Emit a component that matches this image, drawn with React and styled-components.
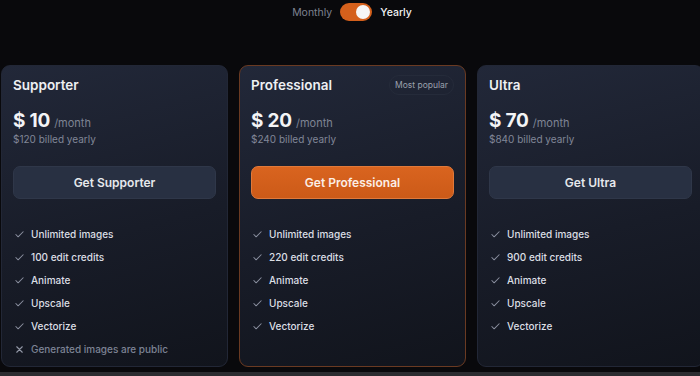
import { useState } from "react";
import styled, { createGlobalStyle, css } from "styled-components";

const plans = [
  {
    name: "Supporter",
    price: 10,
    yearly: 120,
    credits: 100,
    extra: { text: "Generated images are public", ok: false },
  },
  { name: "Professional", price: 20, yearly: 240, credits: 220, popular: true },
  { name: "Ultra", price: 70, yearly: 840, credits: 900 },
];

function Check() {
  return (
    <svg width="11" height="11" viewBox="0 0 24 24" fill="none" stroke="currentColor" strokeWidth="2.2" strokeLinecap="round" strokeLinejoin="round">
      <path d="M20 6 9 17l-5-5" />
    </svg>
  );
}

function Cross() {
  return (
    <svg width="11" height="11" viewBox="0 0 24 24" fill="none" stroke="currentColor" strokeWidth="2.4" strokeLinecap="round">
      <path d="M18 6 6 18M6 6l12 12" />
    </svg>
  );
}

export default function App() {
  const [yearly, setYearly] = useState(true);

  return (
    <Page>
      <GlobalStyle />
      <Toggle>
        <ToggleLabel $active={!yearly}>Monthly</ToggleLabel>
        <Switch $on={yearly} onClick={() => setYearly(!yearly)}>
          <Knob $on={yearly} />
        </Switch>
        <ToggleLabel $active={yearly}>Yearly</ToggleLabel>
      </Toggle>
      <Cards>
        {plans.map((plan) => {
          const features = [
            { text: "Unlimited images", ok: true },
            { text: `${plan.credits} edit credits`, ok: true },
            { text: "Animate", ok: true },
            { text: "Upscale", ok: true },
            { text: "Vectorize", ok: true },
          ];
          if (plan.extra) features.push(plan.extra);
          return (
            <Card key={plan.name} $highlight={plan.popular}>
              <TitleRow>
                <Title>{plan.name}</Title>
                {plan.popular && <Badge>Most popular</Badge>}
              </TitleRow>
              <PriceRow>
                <Price>$ {plan.price}</Price>
                <Per>/month</Per>
              </PriceRow>
              <Billed>${plan.yearly} billed yearly</Billed>
              <Button $primary={plan.popular}>Get {plan.name}</Button>
              <Features>
                {features.map((f) => (
                  <Feature key={f.text} $ok={f.ok}>
                    <Icon $ok={f.ok}>{f.ok ? <Check /> : <Cross />}</Icon>
                    {f.text}
                  </Feature>
                ))}
              </Features>
            </Card>
          );
        })}
      </Cards>
      <Footer />
    </Page>
  );
}

const GlobalStyle = createGlobalStyle`
  * { box-sizing: border-box; }
  html, body {
    margin: 0;
    background: #09090c;
    overflow: hidden;
  }
  body {
    font-family: Inter, "Noto Sans", sans-serif;
  }
`;

const Page = styled.div`
  width: 700px;
  height: 376px;
  display: flex;
  flex-direction: column;
  overflow: hidden;
`;

const Toggle = styled.div`
  display: flex;
  align-items: center;
  justify-content: center;
  gap: 8px;
  padding: 3px 0 0 4px;
  height: 21px;
`;

const ToggleLabel = styled.span`
  font-size: 10.5px;
  color: ${(p) => (p.$active ? "#f1f2f4" : "#7d8290")};
  font-weight: ${(p) => (p.$active ? 500 : 400)};
`;

const Switch = styled.div`
  width: 32px;
  height: 18px;
  border-radius: 9px;
  background: ${(p) => (p.$on ? "#d4601c" : "#3a3f4c")};
  padding: 2px;
  display: flex;
  justify-content: ${(p) => (p.$on ? "flex-end" : "flex-start")};
  cursor: pointer;
`;

const Knob = styled.div`
  width: 14px;
  height: 14px;
  border-radius: 50%;
  background: #f6f6f6;
`;

const Cards = styled.div`
  display: flex;
  gap: 11px;
  margin-top: 44px;
  padding-left: 1px;
  height: 302px;
`;

const Card = styled.div`
  flex: 0 0 227px;
  border-radius: 9px;
  padding: 8px 11px 0 11px;
  background: linear-gradient(165deg, #222839 0%, #181c28 55%, #11141c 100%);
  border: 1px solid ${(p) => (p.$highlight ? "#6a3a22" : "#222736")};
  display: flex;
  flex-direction: column;
`;

const TitleRow = styled.div`
  display: flex;
  align-items: center;
  justify-content: space-between;
  height: 20px;
  margin-top: 1px;
`;

const Title = styled.h2`
  margin: 0;
  font-size: 13.5px;
  font-weight: 600;
  color: #eef0f3;
`;

const Badge = styled.span`
  font-size: 8.5px;
  color: #9aa0ad;
  border: 1px solid #252b3a;
  border-radius: 10px;
  padding: 4px 5px;
`;

const PriceRow = styled.div`
  display: flex;
  align-items: baseline;
  gap: 4px;
  margin-top: 14px;
`;

const Price = styled.span`
  font-size: 19px;
  font-weight: 700;
  color: #f3f4f6;
  letter-spacing: -0.2px;
`;

const Per = styled.span`
  font-size: 11px;
  color: #7e8494;
`;

const Billed = styled.div`
  font-size: 10px;
  color: #818798;
  margin-top: 1px;
`;

const Button = styled.button`
  margin-top: 21px;
  height: 33px;
  width: 100%;
  border-radius: 7px;
  font-family: inherit;
  font-size: 12px;
  font-weight: 600;
  cursor: pointer;
  ${(p) =>
    p.$primary
      ? css`
          background: linear-gradient(180deg, #d9641f, #cc5a18);
          border: 1px solid #e0793a;
          color: #fbeee6;
        `
      : css`
          background: #283042;
          border: 1px solid #2f3749;
          color: #e6e8ec;
        `}
`;

const Features = styled.ul`
  list-style: none;
  margin: 28px 0 0;
  padding: 0 0 0 1px;
  display: flex;
  flex-direction: column;
  gap: 9px;
`;

const Feature = styled.li`
  display: flex;
  align-items: center;
  gap: 6px;
  height: 14px;
  font-size: 10px;
  font-weight: 500;
  color: ${(p) => (p.$ok ? "#dcdfe5" : "#7d8395")};
`;

const Icon = styled.span`
  display: flex;
  width: 11px;
  justify-content: center;
  color: ${(p) => (p.$ok ? "#8b90a0" : "#9297a6")};
`;

const Footer = styled.div`
  margin-top: auto;
  height: 4px;
  background: #2c2d31;
`;
